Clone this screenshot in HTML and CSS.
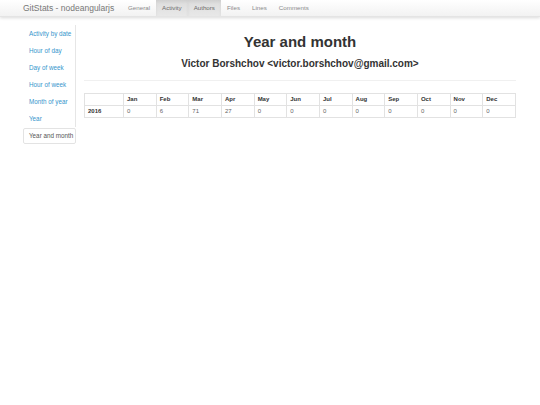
FILE: index.html
```html
<!DOCTYPE html>
<html>
<head>
<meta charset="utf-8">
<link rel="stylesheet" href="styles.css">
</head>
<body>
<div class="navbar">
  <div class="brand">GitStats - nodeangularjs</div>
  <ul class="navlinks">
    <li><a>General</a></li>
    <li class="active"><a>Activity</a></li>
    <li class="active"><a>Authors</a></li>
    <li><a>Files</a></li>
    <li><a>Lines</a></li>
    <li><a>Comments</a></li>
  </ul>
</div>
<div class="page">
  <ul class="side">
    <li><a>Activity by date</a></li>
    <li><a>Hour of day</a></li>
    <li><a>Day of week</a></li>
    <li><a>Hour of week</a></li>
    <li><a>Month of year</a></li>
    <li><a>Year</a></li>
    <li class="current"><a>Year and month</a></li>
  </ul>
  <div class="main">
    <h1>Year and month</h1>
    <h2>Victor Borshchov &lt;victor.borshchov@gmail.com&gt;</h2>
    <hr>
    <table>
      <tr><th class="first"></th><th>Jan</th><th>Feb</th><th>Mar</th><th>Apr</th><th>May</th><th>Jun</th><th>Jul</th><th>Aug</th><th>Sep</th><th>Oct</th><th>Nov</th><th>Dec</th></tr>
      <tr><th class="first">2016</th><td>0</td><td>6</td><td>71</td><td>27</td><td>0</td><td>0</td><td>0</td><td>0</td><td>0</td><td>0</td><td>0</td><td>0</td></tr>
    </table>
  </div>
</div>
</body>
</html>
```
FILE: styles.css
```css
html, body { margin: 0; padding: 0; background: #fff; }
body { font-family: "Liberation Sans", Arial, sans-serif; color: #333; }
.navbar {
  height: 17px;
  display: flex;
  align-items: stretch;
  background: linear-gradient(#ffffff, #f2f2f2);
  box-shadow: 0 1px 3px rgba(0,0,0,0.15);
  border-bottom: 1px solid #e4e4e4;
  box-sizing: border-box;
}
.brand {
  margin-left: 23px;
  font-size: 8.5px;
  line-height: 17px;
  color: #777;
  width: 99px;
  white-space: nowrap;
}
.navlinks { list-style: none; margin: 0; padding: 0; display: flex; }
.navlinks li a {
  display: block;
  font-size: 6.2px;
  line-height: 16px;
  color: #8a8a8a;
  padding: 0 6px;
}
.navlinks li.active a {
  background: linear-gradient(#dcdcdc, #e8e8e8);
  box-shadow: inset 0 2px 3px rgba(0,0,0,0.06);
  color: #6a6a6a;
}
.page { display: flex; padding: 8px 0 0 23px; }
.side {
  list-style: none;
  margin: 0;
  padding: 0;
  width: 53px;
  flex-shrink: 0;
}
.side li { border-right: 1px solid #e6e6e6; }
.side li a {
  display: block;
  font-size: 6.3px;
  line-height: 17px;
  padding-left: 6px;
  color: #3595cc;
  white-space: nowrap;
}
.side li.current {
  border: 1px solid #e3e3e3;
  border-radius: 2px;
  margin-top: 1px;
}
.side li.current a { color: #555; line-height: 14px; padding-left: 5px; }
.main { width: 432px; margin-left: 8px; }
h1 {
  text-align: center;
  font-size: 15px;
  font-weight: bold;
  margin: 7px 0 0 0;
  line-height: 20px;
  color: #333;
}
h2 {
  text-align: center;
  font-size: 10px;
  font-weight: bold;
  margin: 5px 0 0 0;
  line-height: 14px;
  color: #333;
}
hr { border: 0; border-top: 1px solid #f0f0f0; margin: 9px 0 12px 0; }
table {
  border-collapse: collapse;
  width: 432px;
  font-size: 6px;
  table-layout: fixed;
}
th, td {
  border: 1px solid #e2e2e2;
  text-align: left;
  height: 11px;
  padding: 0 0 0 3px;
  line-height: 11px;
}
th { font-weight: bold; color: #333; }
td { color: #666; font-weight: normal; }
th.first { width: 35px; }
```
